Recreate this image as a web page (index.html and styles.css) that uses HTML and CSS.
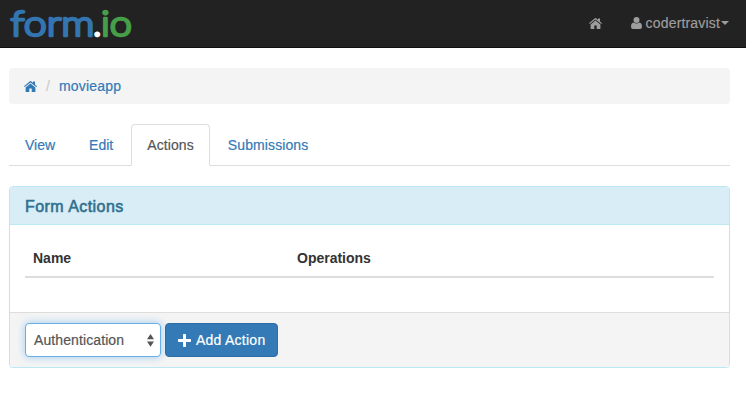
FILE: index.html
```html
<!DOCTYPE html>
<html lang="en">
<head>
<meta charset="utf-8">
<title>form.io</title>
<link rel="stylesheet" href="styles.css">
</head>
<body>
<svg class="symbols" aria-hidden="true">
  <symbol id="home" viewBox="0 0 13 11">
    <path fill="currentColor" d="M6.5 2.5 11.4 6.500V10.400q0 .6-.6.6H7.700V7.600H5.300V11H2.200q-.6 0-.6-.6V6.500z"/>
    <path fill="currentColor" d="M5.900.3q.6-.4 1.200 0L9 1.800V.6h2v2.900l2 1.700-.7.900-5.800-4.700L.7 6.100 0 5.200z"/>
  </symbol>
</svg>
<header class="navbar">
  <a class="brand">
    <svg width="140" height="47" viewBox="0 0 140 47">
      <text class="word blue" x="10.5" y="36" textLength="84" lengthAdjust="spacingAndGlyphs">form</text>
      <text class="word white" x="93" y="36">.</text>
      <text class="word green" x="101" y="36" textLength="31" lengthAdjust="spacingAndGlyphs">io</text>
    </svg>
  </a>
  <nav class="nav-right">
    <a><svg class="home-icon" width="13" height="11"><use href="#home"/></svg></a>
    <a class="user">
      <svg width="11" height="12" viewBox="0 0 11 12"><circle cx="5.5" cy="3" r="3" fill="currentColor"/><path fill="currentColor" d="M2.6 5.4Q5.5 7.7 8.4 5.4 11 5.7 11 9.8 11 12 9 12H2Q0 12 0 9.8 0 5.7 2.6 5.4z"/></svg>
      <span>codertravist</span><i class="caret"></i>
    </a>
  </nav>
</header>
<main class="container">
  <div class="breadcrumb">
    <a><svg class="home-icon" width="13" height="11"><use href="#home"/></svg></a>
    <span class="slash">/</span>
    <a>movieapp</a>
  </div>
  <nav class="tabs">
    <a>View</a><a>Edit</a><a class="active">Actions</a><a>Submissions</a>
  </nav>
  <section class="panel">
    <h3 class="panel-heading">Form Actions</h3>
    <div class="panel-body">
      <div class="table-head"><span>Name</span><span>Operations</span></div>
    </div>
    <div class="panel-footer">
      <div class="select">
        <span>Authentication</span>
        <svg width="7" height="13" viewBox="0 0 7 13"><path fill="#555" d="M3.5 0 7 5.3H0zM0 7.5h7L3.5 12.8z"/></svg>
      </div>
      <button class="button">
        <svg width="13" height="13" viewBox="0 0 13 13"><path fill="#fff" d="M5.7 0h1.600q.7 0 .7.7V5h4.300q.7 0 .7.7v1.600q0 .7-.7.7H8v4.300q0 .7-.7.7H5.700q-.7 0-.7-.7V8H.7q-.7 0-.7-.7V5.700Q0 5 .7 5H5V.7q0-.7.7-.7z"/></svg>
        <span>Add Action</span>
      </button>
    </div>
  </section>
</main>
</body>
</html>
```
FILE: styles.css
```css
* { box-sizing: border-box; }
body {
  margin: 0;
  background: #fff;
  color: #333;
  font: 14px/20px "Liberation Sans", Arial, sans-serif;
  letter-spacing: .1px;
  -webkit-text-stroke: .2px currentColor;
}
.symbols { display: none; }
svg { display: block; flex: none; }
.navbar {
  display: flex;
  justify-content: space-between;
  height: 48px;
  background: #222;
  border-bottom: 1px solid #101010;
}
.word {
  font: 300 36px Lato, sans-serif;
  letter-spacing: 0;
  stroke-width: 2.6px;
  stroke-linejoin: round;
  stroke-linecap: round;
  -webkit-text-stroke: 2.6px;
}
.blue { fill: #3375b0; stroke: #3375b0; }
.white { fill: #fff; stroke: #fff; }
.green { fill: #469e48; stroke: #469e48; }
.nav-right {
  display: flex;
  align-items: center;
  gap: 29px;
  padding: 0 17px 1px 0;
  color: #9d9d9d;
}
.user { display: flex; align-items: center; }
.user span { margin-left: 4px; letter-spacing: .17px; }
.caret {
  margin-left: 1px;
  border: 4px solid transparent;
  border-top-color: currentColor;
  border-bottom: 0;
}
.container { padding: 20px 16px 0 9px; }
.breadcrumb {
  display: flex;
  align-items: center;
  height: 36px;
  margin-bottom: 20px;
  padding: 0 15px;
  border-radius: 4px;
  background: #f4f4f4;
  color: #337ab7;
}
.breadcrumb a:last-child { letter-spacing: .2px; }
.slash { margin: 0 9px; color: #ccc; }
.tabs {
  display: flex;
  height: 42px;
  margin-bottom: 20px;
  border-bottom: 1px solid #ddd;
  color: #337ab7;
}
.tabs a {
  height: 42px;
  margin-right: 2px;
  padding: 10px 15px;
  border: 1px solid transparent;
  border-radius: 4px 4px 0 0;
}
.tabs a:nth-child(-n+2) { letter-spacing: 0; }
.tabs .active {
  border-color: #ddd;
  border-bottom-color: #fff;
  background: #fff;
  color: #555;
}
.panel {
  height: 182px;
  border: 1px solid #bce8f1;
  border-radius: 4px;
  box-shadow: 0 1px 1px rgba(0, 0, 0, .05);
  overflow: hidden;
}
.panel-heading {
  height: 38px;
  margin: 0;
  padding: 10px 15px;
  border-bottom: 1px solid #bce8f1;
  background: #d9edf7;
  color: #31708f;
  font-size: 16px;
  font-weight: normal;
  line-height: 19px;
  letter-spacing: .45px;
  -webkit-text-stroke: .6px currentColor;
}
.panel-body { height: 87px; padding: 15px; }
.table-head {
  display: grid;
  grid-template-columns: 264px 1fr;
  height: 38px;
  padding: 8px;
  border-bottom: 2px solid #ddd;
  font-weight: bold;
  letter-spacing: 0;
  -webkit-text-stroke: 0;
}
.panel-footer {
  display: flex;
  gap: 4px;
  height: 55px;
  padding: 10px 15px;
  border-top: 1px solid #ddd;
  background: #f4f4f4;
}
.select {
  display: flex;
  justify-content: space-between;
  align-items: center;
  width: 136px;
  height: 34px;
  padding: 0 6px 0 8px;
  border: 1px solid #66afe9;
  border-radius: 4px;
  background: #fff;
  box-shadow: 0 0 8px rgba(102, 175, 233, .6);
  color: #555;
}
.button {
  display: flex;
  align-items: center;
  gap: 5px;
  width: 113px;
  height: 34px;
  padding: 0 12px;
  border: 1px solid #2e6da4;
  border-radius: 4px;
  background: #337ab7;
  color: #fff;
  font: inherit;
  letter-spacing: .25px;
  white-space: nowrap;
  -webkit-text-stroke: .2px currentColor;
}
```
